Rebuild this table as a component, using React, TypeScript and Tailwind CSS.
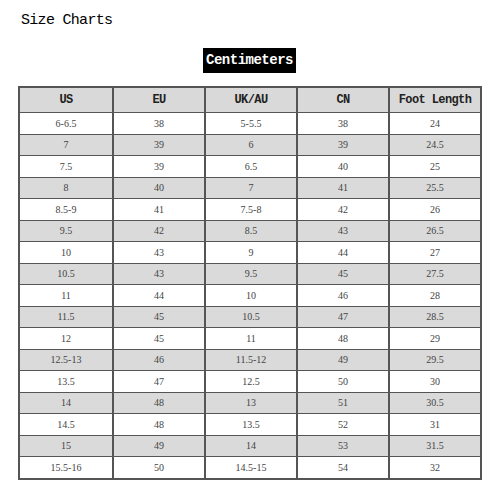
import React from "react";

const rows: string[][] = [
  ["6-6.5", "38", "5-5.5", "38", "24"],
  ["7", "39", "6", "39", "24.5"],
  ["7.5", "39", "6.5", "40", "25"],
  ["8", "40", "7", "41", "25.5"],
  ["8.5-9", "41", "7.5-8", "42", "26"],
  ["9.5", "42", "8.5", "43", "26.5"],
  ["10", "43", "9", "44", "27"],
  ["10.5", "43", "9.5", "45", "27.5"],
  ["11", "44", "10", "46", "28"],
  ["11.5", "45", "10.5", "47", "28.5"],
  ["12", "45", "11", "48", "29"],
  ["12.5-13", "46", "11.5-12", "49", "29.5"],
  ["13.5", "47", "12.5", "50", "30"],
  ["14", "48", "13", "51", "30.5"],
  ["14.5", "48", "13.5", "52", "31"],
  ["15", "49", "14", "53", "31.5"],
  ["15.5-16", "50", "14.5-15", "54", "32"],
];

const headers = ["US", "EU", "UK/AU", "CN", "Foot Length"];

export default function App() {
  return (
    <div className="w-[500px] h-[500px] bg-white flex flex-col overflow-hidden">
      <div
        className="mt-[11px] ml-[21px] h-[20px] leading-[20px] text-[15px] tracking-[-0.7px] text-black"
        style={{ fontFamily: '"Liberation Mono", monospace' }}
      >
        Size Charts
      </div>
      <div
        className="mt-[17px] self-center ml-[-1px] w-[93px] h-[25px] bg-black text-white font-bold text-[14px] tracking-[-0.5px] flex items-center justify-center"
        style={{ fontFamily: '"Liberation Mono", monospace' }}
      >
        Centimeters
      </div>
      <div className="mt-[13px] ml-[18px] w-[464px] border-2 border-[#555]">
        <div className="grid grid-cols-5 h-[24px] bg-[#d9d9d9]">
          {headers.map((h, i) => (
            <div
              key={h}
              className={`flex items-center justify-center font-bold text-[12px] tracking-[-0.6px] text-[#222] ${i > 0 ? "border-l-2 border-[#555]" : ""}`}
              style={{ fontFamily: '"Liberation Mono", monospace' }}
            >
              {h}
            </div>
          ))}
        </div>
        {rows.map((r, ri) => (
          <div
            key={ri}
            className={`grid grid-cols-5 h-[21.5px] border-t border-[#555] ${ri % 2 === 1 ? "bg-[#dadada]" : "bg-white"}`}
          >
            {r.map((c, ci) => (
              <div
                key={ci}
                className={`flex items-center justify-center text-[10px] text-[#444] ${ci > 0 ? "border-l-2 border-[#555]" : ""}`}
                style={{ fontFamily: '"Liberation Serif", serif' }}
              >
                {c}
              </div>
            ))}
          </div>
        ))}
      </div>
    </div>
  );
}
